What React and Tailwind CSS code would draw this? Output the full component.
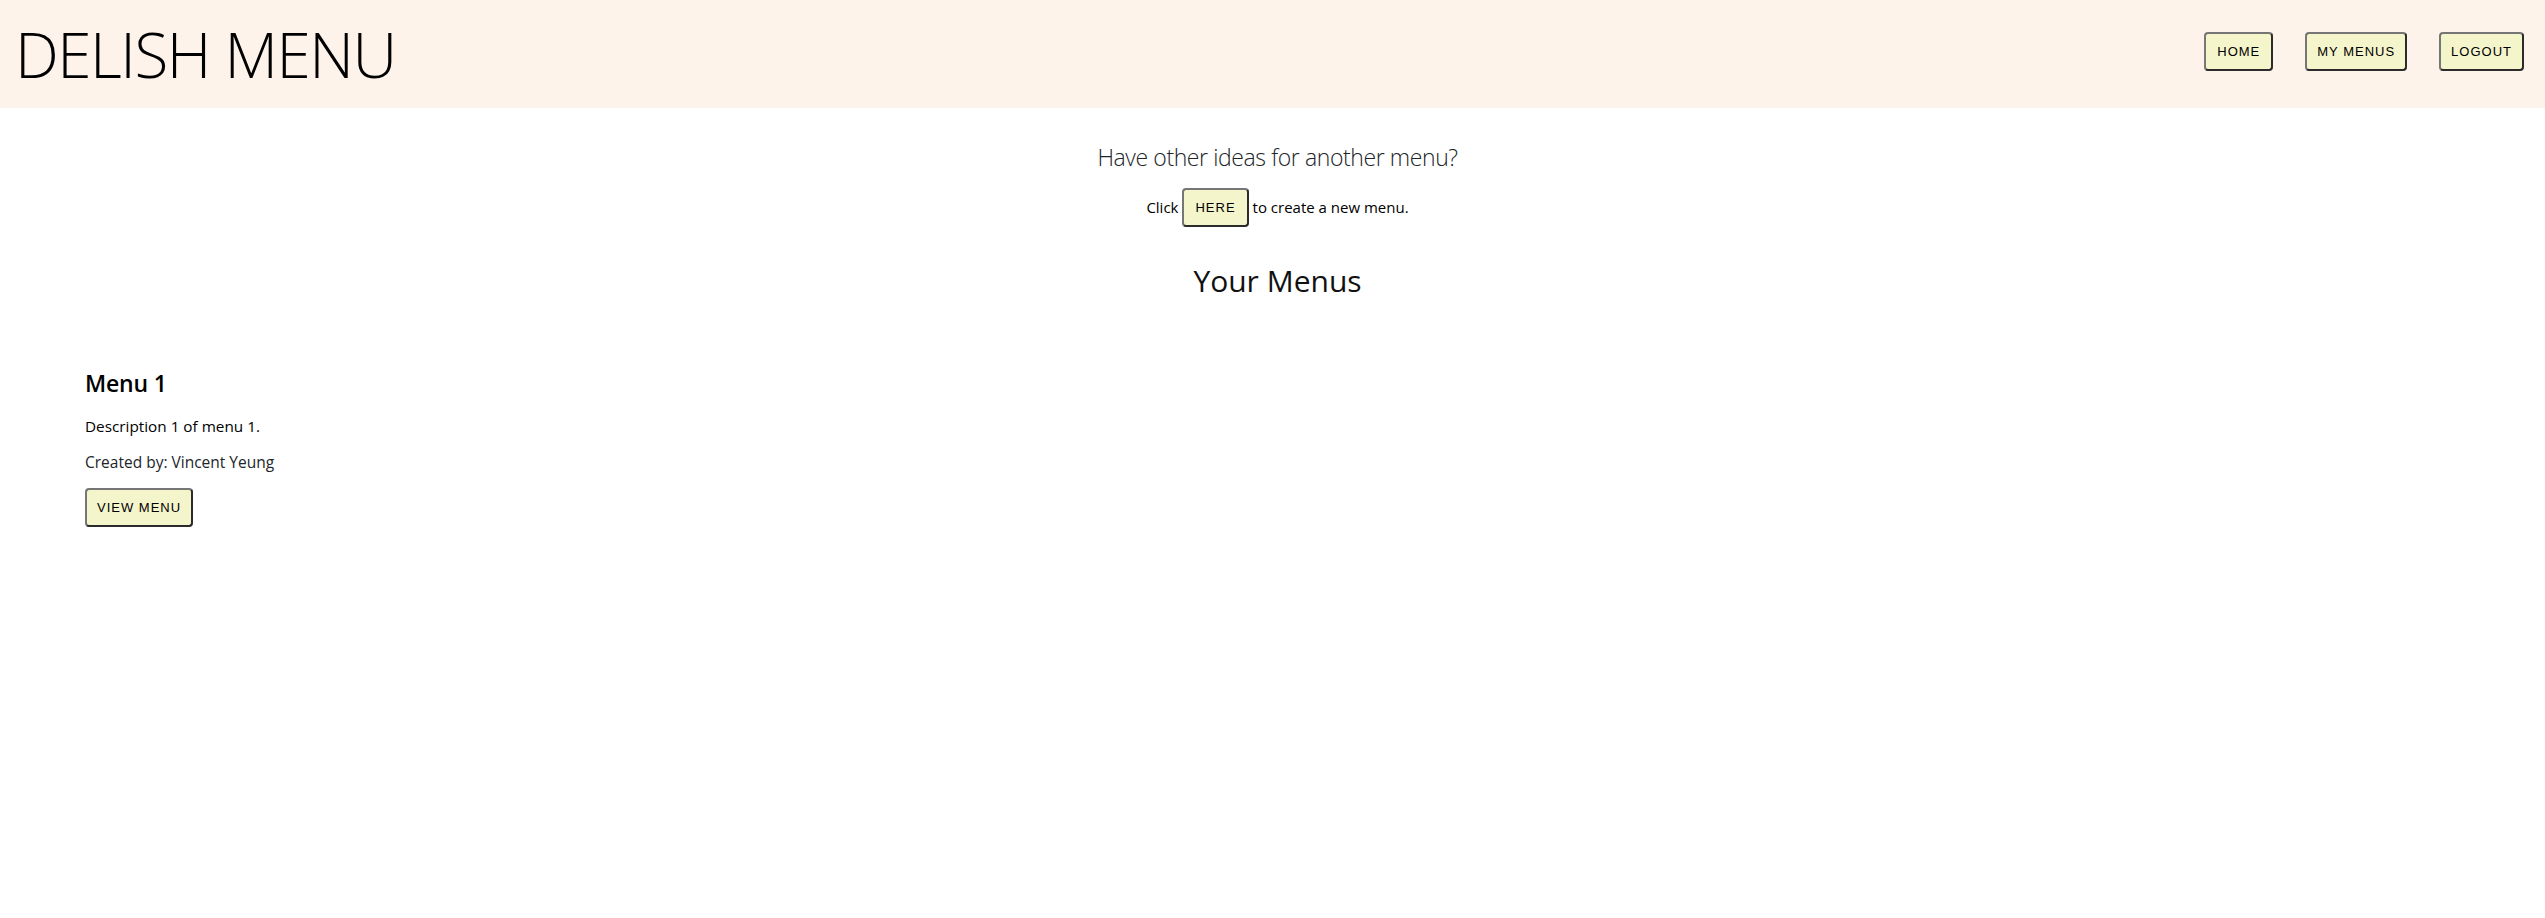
import React from "react";

const btn =
  "h-[39px] px-[10px] bg-[#f5f5cc] rounded-[4px] border-2 [border-style:solid] border-t-[#767676] border-l-[#767676] border-r-[#2b2b2b] border-b-[#2b2b2b] text-[13px] tracking-[1px] text-black leading-none flex items-center justify-center";
const btnFont = { fontFamily: '"Liberation Sans", Arial, sans-serif' };

export default function App() {
  return (
    <div className="min-h-[918px] bg-white text-black" style={{ fontFamily: '"Open Sans", "Noto Sans", sans-serif' }}>
      <header className="h-[108px] bg-[#fdf3ea] flex items-center justify-between pl-[15px] pr-[21px]">
        <h1 className="text-[62px] font-light leading-none tracking-[-1.5px]">DELISH MENU</h1>
        <nav className="flex gap-[32px] mb-[5px]">
          <button className={btn + " px-[11px]"} style={btnFont}>HOME</button>
          <button className={btn} style={btnFont}>MY MENUS</button>
          <button className={btn} style={btnFont}>LOGOUT</button>
        </nav>
      </header>
      <main className="flex flex-col">
        <div className="flex flex-col items-center pl-[10px]">
          <h3 className="mt-[33px] text-[23px] leading-[32px] font-light tracking-[-0.4px] text-[#212529]">Have other ideas for another menu?</h3>
          <div className="mt-[15px] flex items-center gap-[4px] text-[15px]">
            <span>Click</span>
            <button className={btn + " px-[11px]"} style={btnFont}>HERE</button>
            <span>to create a new menu.</span>
          </div>
          <h2 className="mt-[34px] text-[30px] leading-[40px] text-[#111]">Your Menus</h2>
        </div>
        <section className="mt-[66px] pl-[85px] flex flex-col items-start">
          <h4 className="text-[23px] leading-[32px] font-semibold tracking-[-0.2px]">Menu 1</h4>
          <p className="mt-[15px] text-[15.3px] leading-[24px]">Description 1 of menu 1.</p>
          <p className="mt-[12px] text-[15.5px] leading-[24px] font-medium text-[#212529]">Created by: Vincent Yeung</p>
          <button className={btn + " mt-[14px] px-[9px] h-[38px]"} style={btnFont}>VIEW MENU</button>
        </section>
      </main>
    </div>
  );
}
